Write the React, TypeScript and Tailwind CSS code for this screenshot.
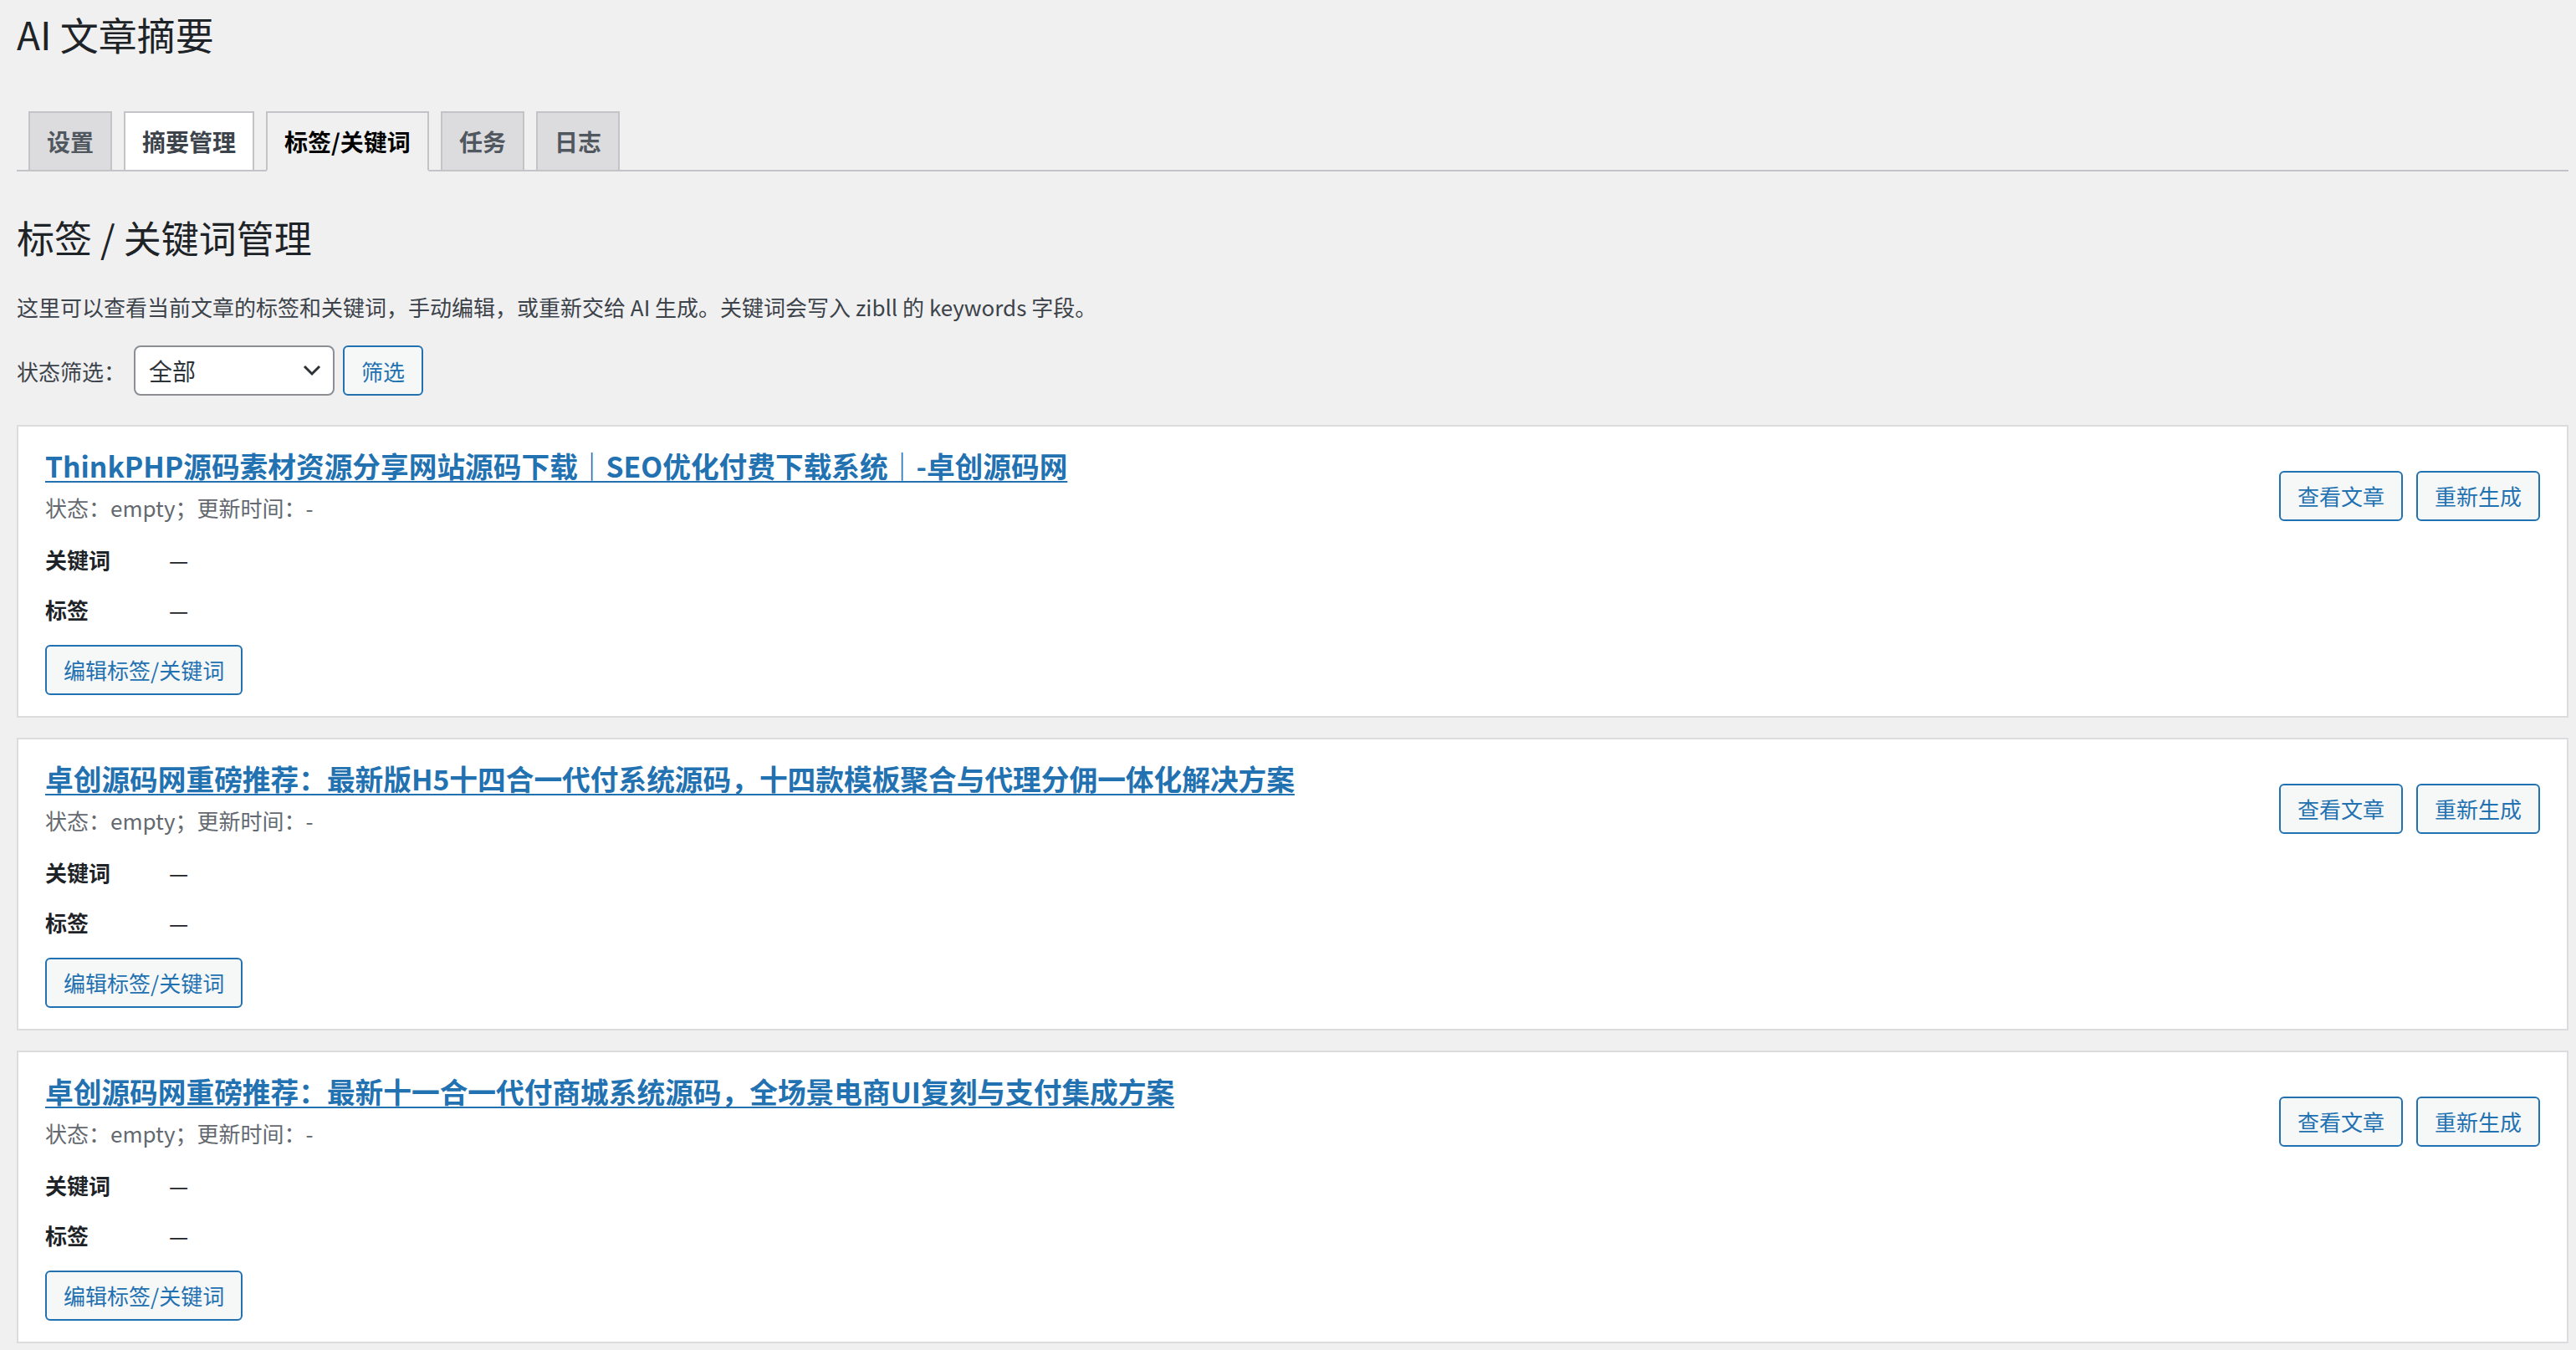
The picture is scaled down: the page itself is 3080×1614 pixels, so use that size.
import { useState } from 'react'

const FONT = { fontFamily: '"Noto Sans CJK SC", "Noto Sans", sans-serif' }

const tabs = ['设置', '摘要管理', '标签/关键词', '任务', '日志']

const posts = [
  'ThinkPHP源码素材资源分享网站源码下载｜SEO优化付费下载系统｜-卓创源码网',
  '卓创源码网重磅推荐：最新版H5十四合一代付系统源码，十四款模板聚合与代理分佣一体化解决方案',
  '卓创源码网重磅推荐：最新十一合一代付商城系统源码，全场景电商UI复刻与支付集成方案',
]

function OutlineButton({ children }: { children: React.ReactNode }) {
  return (
    <button className="h-[60px] px-[20px] border-2 border-[#2271b1] rounded-[6px] bg-[#f6f7f7] text-[#2271b1] text-[26px] leading-[40px] whitespace-nowrap">
      {children}
    </button>
  )
}

function PostCard({ title }: { title: string }) {
  return (
    <div className="bg-white border-2 border-[#dcdcde] px-[32px] pt-[23px] pb-[25px] flex justify-between items-start">
      <div className="flex-1 min-w-0">
        <a href="#" className="block text-[33.7px] leading-[48px] font-semibold text-[#2271b1] underline decoration-2 underline-offset-[4px]">
          {title}
        </a>
        <div className="mt-[6px] text-[26px] leading-[40px] text-[#646970]">状态：empty；更新时间：-</div>
        <div className="mt-[11px]">
          <div className="flex items-center h-[60px] text-[26px]">
            <span className="w-[148px] font-semibold text-[#1d2327]">关键词</span>
            <span className="text-[#1d2327]">—</span>
          </div>
          <div className="flex items-center h-[60px] text-[26px]">
            <span className="w-[148px] font-semibold text-[#1d2327]">标签</span>
            <span className="text-[#1d2327]">—</span>
          </div>
        </div>
        <div className="mt-[13px]">
          <OutlineButton>编辑标签/关键词</OutlineButton>
        </div>
      </div>
      <div className="flex gap-[16px] mt-[30px] shrink-0">
        <OutlineButton>查看文章</OutlineButton>
        <OutlineButton>重新生成</OutlineButton>
      </div>
    </div>
  )
}

export default function App() {
  const [status, setStatus] = useState('all')
  const active = 2

  return (
    <div style={FONT} className="min-h-screen bg-[#f0f0f1] text-[#3c434a] pl-[20px] pr-[9px] pt-[10px] pb-[12px]">
      <h1 className="text-[46px] leading-[60px] font-normal text-[#1d2327]">AI 文章摘要</h1>

      {/* tabs */}
      <div className="mt-[63px] flex border-b-2 border-[#c3c4c7]">
        {tabs.map((t, i) => (
          <div
            key={t}
            className={
              'ml-[14px] -mb-[2px] border-2 px-[20px] py-[10px] text-[28px] leading-[48px] font-semibold ' +
              (i === active
                ? 'bg-[#f0f0f1] border-[#c3c4c7] border-b-[#f0f0f1] text-black'
                : i === 1
                  ? 'bg-white border-[#c3c4c7] text-[#3c434a]'
                  : 'bg-[#dcdcde] border-[#c3c4c7] text-[#50575e]')
            }
          >
            {t}
          </div>
        ))}
      </div>

      <h2 className="mt-[50px] text-[45px] leading-[58px] font-normal text-[#1d2327]">标签 / 关键词管理</h2>

      <p className="mt-[34px] text-[26px] leading-[40px]">
        这里可以查看当前文章的标签和关键词，手动编辑，或重新交给 AI 生成。关键词会写入 zibll 的 keywords 字段。
      </p>

      {/* filter */}
      <div className="mt-[26px] flex items-center">
        <span className="text-[26px] w-[140px]">状态筛选：</span>
        <div className="relative w-[240px] h-[60px]">
          <select
            value={status}
            onChange={(e) => setStatus(e.target.value)}
            style={FONT}
            className="appearance-none w-full h-full bg-white border-2 border-[#8c8f94] rounded-[8px] pl-[16px] pr-[50px] text-[28px] text-[#2c3338] outline-none"
          >
            <option value="all">全部</option>
            <option value="empty">empty</option>
            <option value="done">done</option>
          </select>
          <svg
            className="absolute right-[16px] top-1/2 -translate-y-1/2 pointer-events-none"
            width="22"
            height="14"
            viewBox="0 0 22 14"
            fill="none"
          >
            <path d="M2 2l9 9 9-9" stroke="#2c3338" strokeWidth="3" />
          </svg>
        </div>
        <button className="ml-[10px] h-[60px] px-[20px] border-2 border-[#2271b1] rounded-[6px] bg-[#f6f7f7] text-[#2271b1] text-[26px]">
          筛选
        </button>
      </div>

      <div className="mt-[35px] flex flex-col gap-[24px]">
        {posts.map((p) => (
          <PostCard key={p} title={p} />
        ))}
      </div>
    </div>
  )
}
